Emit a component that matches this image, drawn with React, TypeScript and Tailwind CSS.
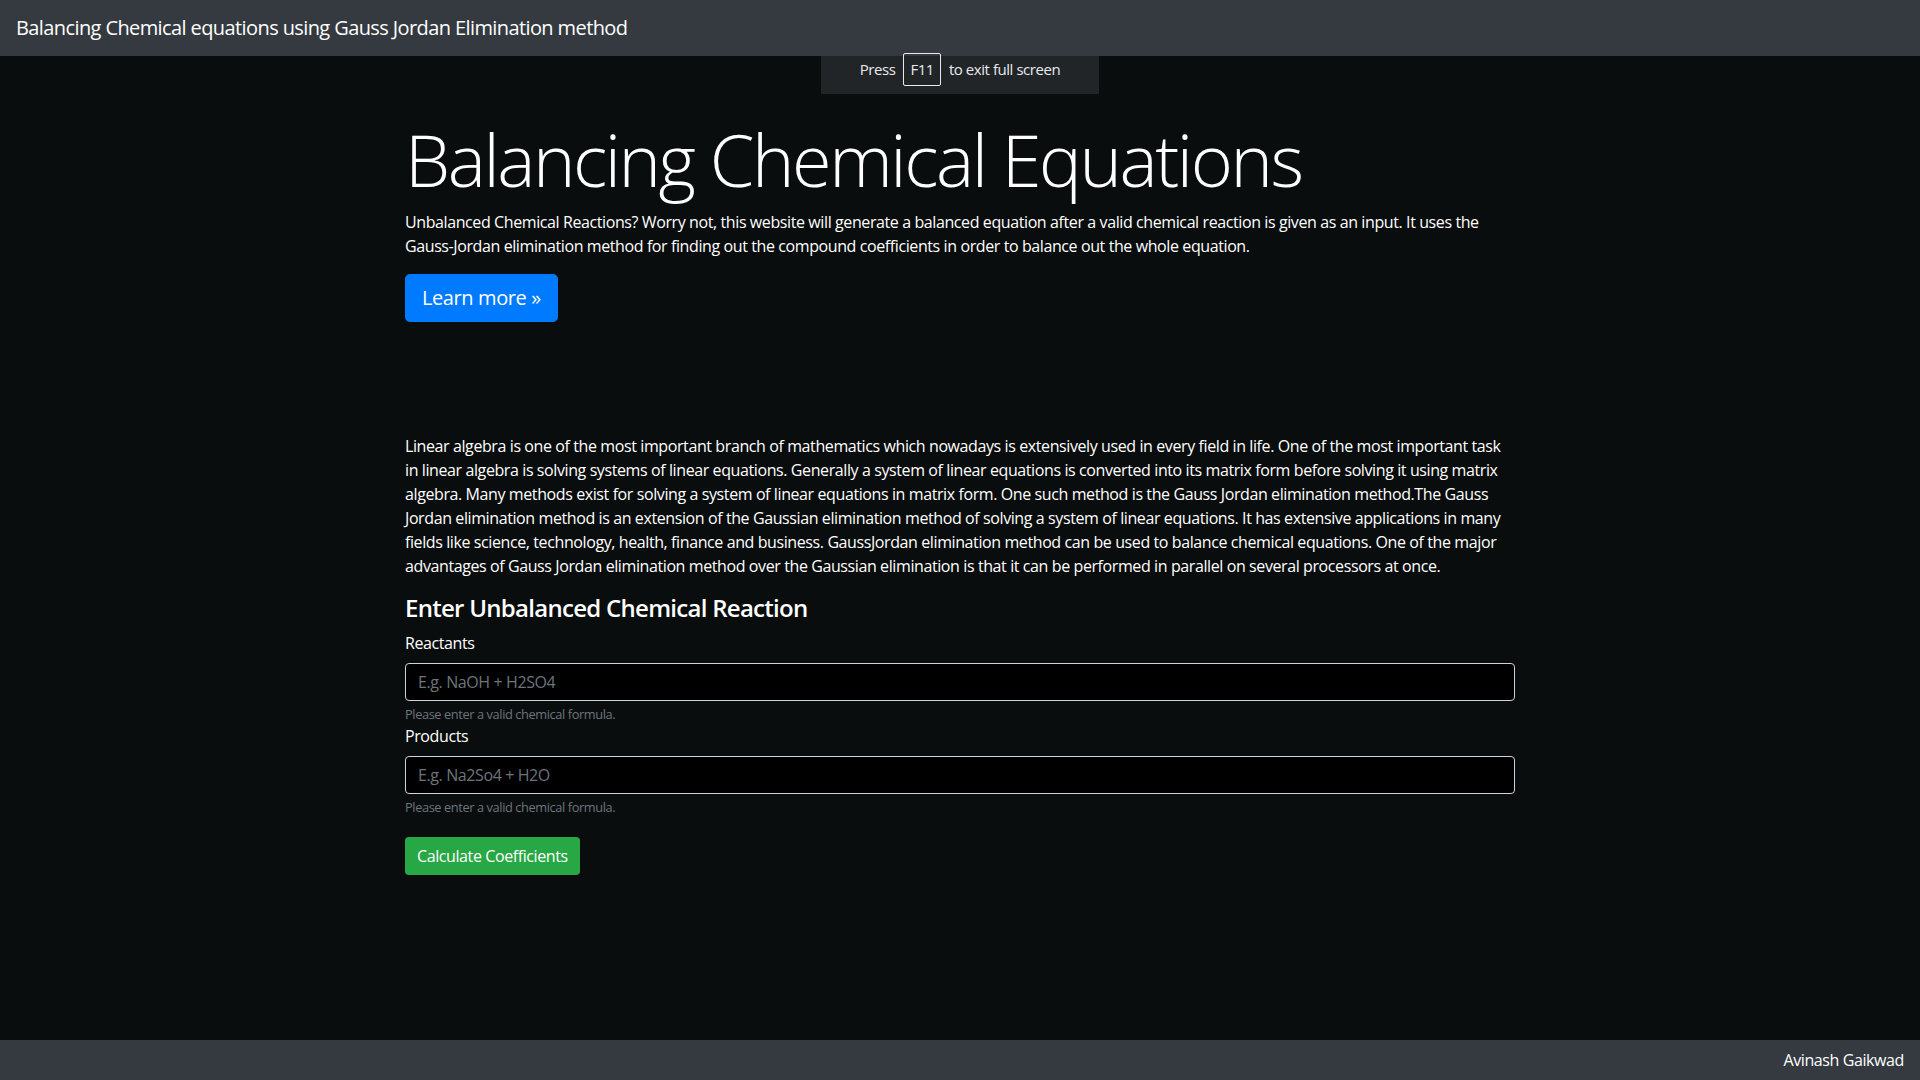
import React from 'react';

const FONT = "font-['Open_Sans',_'Liberation_Sans',_sans-serif]";

export default function App() {
  return (
    <div className={`min-h-screen flex flex-col bg-[#0a0d0d] text-white tracking-[-0.025em] ${FONT}`}>
      {/* Navbar */}
      <nav className="h-[56px] bg-[#343a40] px-4 flex items-center shrink-0">
        <span className="text-[20px] leading-[30px] text-white tracking-[-0.03em]">
          Balancing Chemical equations using Gauss Jordan Elimination method
        </span>
      </nav>

      {/* Full screen hint (browser overlay) */}
      <div className="absolute left-[821px] top-[45px] w-[278px] h-[49px] bg-[rgba(52,58,64,0.55)] flex items-center justify-center gap-[8px] text-[15px] text-[#e8eaed] tracking-[-0.03em]">
        <span>Press</span>
        <span className="border border-[#e8eaed] rounded-[2px] h-[33px] px-[6px] flex items-center">F11</span>
        <span>to exit full screen</span>
      </div>

      <main className="flex-1">
        {/* Jumbotron */}
        <div className="pt-[60px] pb-[64px] mb-[32px]">
          <div className="w-[1140px] mx-auto px-[15px]">
            <h1 className="text-[72px] leading-[1.2] font-light tracking-[-0.034em] mb-2">Balancing Chemical Equations</h1>
            <p className="text-base leading-6 mb-4">
              Unbalanced Chemical Reactions? Worry not, this website will generate a balanced equation after a valid chemical reaction is given as an input. It uses the Gauss-Jordan elimination method for finding out the compound coefficients in order to balance out the whole equation.
            </p>
            <button className="h-[48px] bg-[#007bff] border border-[#007bff] text-white text-[20px] leading-[30px] px-4 rounded-[4.8px]">
              Learn more »
            </button>
          </div>
        </div>

        <div className="w-[1140px] mx-auto px-[15px] pt-4">
          <p className="text-base leading-6 mb-4">
            Linear algebra is one of the most important branch of mathematics which nowadays is extensively used in every field in life. One of the most important task in linear algebra is solving systems of linear equations. Generally a system of linear equations is converted into its matrix form before solving it using matrix algebra. Many methods exist for solving a system of linear equations in matrix form. One such method is the Gauss Jordan elimination method.The Gauss Jordan elimination method is an extension of the Gaussian elimination method of solving a system of linear equations. It has extensive applications in many fields like science, technology, health, finance and business. GaussJordan elimination method can be used to balance chemical equations. One of the major advantages of Gauss Jordan elimination method over the Gaussian elimination is that it can be performed in parallel on several processors at once.
          </p>

          <h4 className="text-[24px] leading-[1.2] font-semibold tracking-[-0.03em] mb-2">Enter Unbalanced Chemical Reaction</h4>

          <form onSubmit={(e) => e.preventDefault()}>
            <label className="block text-base leading-6 mb-2">Reactants</label>
            <input
              type="text"
              placeholder="E.g. NaOH + H2SO4"
              className="block w-full h-[38px] bg-black border border-[#ced4da] rounded px-3 text-base text-white placeholder:text-[#6c757d] outline-none"
            />
            <small className="block mt-1 text-[12.8px] leading-[19px] text-[#6c757d]">Please enter a valid chemical formula.</small>

            <label className="block text-base leading-6 mb-2">Products</label>
            <input
              type="text"
              placeholder="E.g. Na2So4 + H2O"
              className="block w-full h-[38px] bg-black border border-[#ced4da] rounded px-3 text-base text-white placeholder:text-[#6c757d] outline-none"
            />
            <small className="block mt-1 text-[12.8px] leading-[19px] text-[#6c757d]">Please enter a valid chemical formula.</small>

            <button type="submit" className="mt-5 h-[38px] px-3 bg-[#28a745] text-white text-base rounded">
              Calculate Coefficients
            </button>
          </form>
        </div>
      </main>

      {/* Footer */}
      <footer className="h-[40px] bg-[#343a40] flex items-center justify-end px-4 shrink-0">
        <span className="text-base text-white">Avinash Gaikwad</span>
      </footer>
    </div>
  );
}
